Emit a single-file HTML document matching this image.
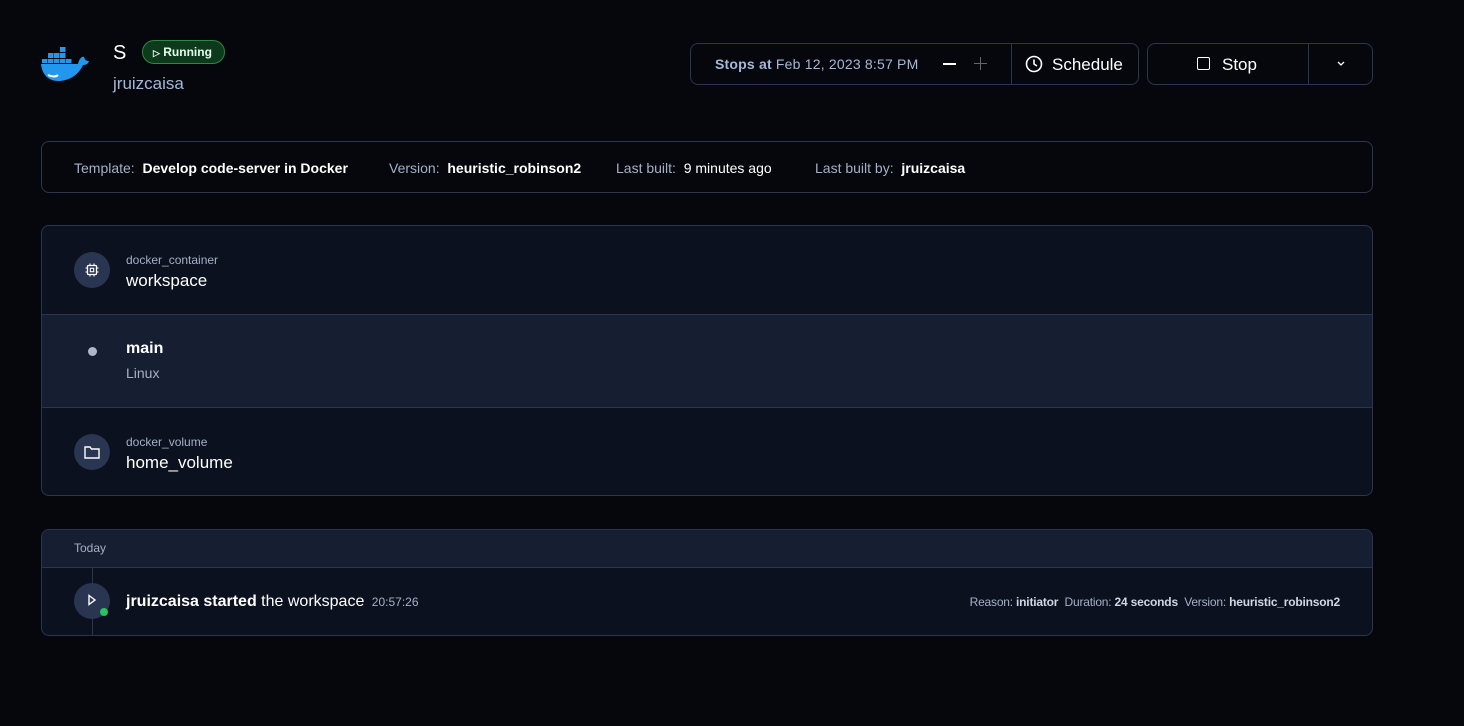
<!DOCTYPE html><html><head><style>
body{margin:0;width:1464px;height:726px;background:#05070d;font-family:"Liberation Sans",sans-serif;color:#fff;position:relative;overflow:hidden}
.a{position:absolute}
.box{position:absolute;border:1px solid #2b3550;border-radius:8px;box-sizing:border-box}
.lbl{color:#a5b0c6}
.ic{position:absolute;left:32px;width:36px;height:36px;border-radius:50%;background:#2a3552}
</style></head><body>
<svg class="a" style="left:40px;top:44px" width="50" height="38" viewBox="0 0 50 38">
<g fill="#2396ed"><rect x="20" y="3" width="5.5" height="5"/><rect x="14" y="9" width="5.5" height="5"/><rect x="20" y="9" width="5.5" height="5"/><rect x="8" y="9" width="5.5" height="5"/><rect x="2" y="15" width="5.5" height="4"/><rect x="8" y="15" width="5.5" height="4"/><rect x="14" y="15" width="5.5" height="4"/><rect x="20" y="15" width="5.5" height="4"/><rect x="26" y="15" width="5.5" height="4"/>
<path d="M1 20 H38 C39 15 42 12 44 13 C45 16 46 17 49 17 C48 20 46 21 43 21 C38 32 28 37 18 37 C8 37 2 30 1 20Z"/></g>
<path d="M8 31 C12 33 16 33 18 31" stroke="#fff" stroke-width="2" fill="none"/></svg>
<div class="a" style="left:113px;top:42px;font-size:20px">S</div>
<div class="a" style="left:142px;top:40px;width:81px;height:22px;border:1px solid #2b8a3e;background:#0d3a1c;border-radius:12px;font-size:12px;line-height:22px;color:#e5ffe8;font-weight:bold"><span style="margin-left:10px;font-size:9px">▷</span> Running</div>
<div class="a" style="left:113px;top:74px;font-size:17px;color:#a5b8d8">jruizcaisa</div>

<div class="box" style="left:690px;top:43px;width:449px;height:42px;background:#05070d"></div>
<div class="a" style="left:1011px;top:43px;width:1px;height:42px;background:#2b3550"></div>
<div class="a" style="left:715px;top:56px;font-size:14px;color:#a5b8d8;letter-spacing:0.2px"><b>Stops at</b> Feb 12, 2023 8:57 PM</div>
<div class="a" style="left:943px;top:63px;width:13px;height:2px;background:#fff"></div>
<div class="a" style="left:974px;top:63px;width:13px;height:1px;background:#666"></div><div class="a" style="left:980px;top:57px;width:1px;height:13px;background:#666"></div>
<svg class="a" style="left:1025px;top:55px" width="18" height="18" viewBox="0 0 18 18"><circle cx="9" cy="9" r="7.5" stroke="#fff" stroke-width="1.6" fill="none"/><path d="M9 4.5V9L12 11" stroke="#fff" stroke-width="1.6" fill="none"/></svg>
<div class="a" style="left:1052px;top:55px;font-size:17px">Schedule</div>
<div class="box" style="left:1147px;top:43px;width:226px;height:42px"></div>
<div class="a" style="left:1308px;top:43px;width:1px;height:42px;background:#2b3550"></div>
<div class="a" style="left:1197px;top:57px;width:11px;height:11px;border:1.5px solid #fff;border-radius:2px"></div>
<div class="a" style="left:1222px;top:55px;font-size:17px">Stop</div>
<svg class="a" style="left:1336px;top:60px" width="10" height="8"><path d="M2 2L5 5L8 2" stroke="#fff" stroke-width="1.3" fill="none"/></svg>

<div class="box" style="left:41px;top:141px;width:1332px;height:52px"></div>
<div class="a" style="left:74px;top:160px;font-size:14px;white-space:pre"><span class="lbl">Template:</span>  <b>Develop code-server in Docker</b></div>
<div class="a" style="left:389px;top:160px;font-size:14px;white-space:pre"><span class="lbl">Version:</span>  <b>heuristic_robinson2</b></div>
<div class="a" style="left:616px;top:160px;font-size:14px;white-space:pre"><span class="lbl">Last built:</span>  9 minutes ago</div>
<div class="a" style="left:815px;top:160px;font-size:14px;white-space:pre"><span class="lbl">Last built by:</span>  <b>jruizcaisa</b></div>

<div class="box" style="left:41px;top:225px;width:1332px;height:271px;background:#0b111e;overflow:hidden">
<div class="a" style="left:0;top:88px;width:1332px;height:92px;background:#161e31;border-top:1px solid #2b3550;border-bottom:1px solid #2b3550"></div>
<div class="ic" style="top:26px"></div>
<svg class="a" style="left:42px;top:36px" width="16" height="16" viewBox="0 0 16 16"><rect x="3.5" y="3.5" width="9" height="9" rx="1" stroke="#fff" stroke-width="1.3" fill="none"/><rect x="6.3" y="6.3" width="3.4" height="3.4" stroke="#fff" stroke-width="1.1" fill="none"/><path d="M6 1.5V3.5M10 1.5V3.5M6 12.5V14.5M10 12.5V14.5M1.5 6H3.5M1.5 10H3.5M12.5 6H14.5M12.5 10H14.5" stroke="#fff" stroke-width="1.1"/></svg>
<div class="a" style="left:84px;top:27px;font-size:12px;color:#a5b0c6">docker_container</div>
<div class="a" style="left:84px;top:45px;font-size:17px">workspace</div>
<div class="a" style="left:46px;top:121px;width:9px;height:9px;border-radius:50%;background:#aeb8cc"></div>
<div class="a" style="left:84px;top:114px;font-size:16px;font-weight:bold">main</div>
<div class="a" style="left:84px;top:139px;font-size:14px;color:#a5b0c6">Linux</div>
<div class="ic" style="top:208px"></div>
<svg class="a" style="left:41px;top:218px" width="18" height="16"><path d="M2 3H7L8.5 5H16V14H2Z" stroke="#fff" stroke-width="1.4" fill="none"/></svg>
<div class="a" style="left:84px;top:209px;font-size:12px;color:#a5b0c6">docker_volume</div>
<div class="a" style="left:84px;top:227px;font-size:17px">home_volume</div>
</div>

<div class="box" style="left:41px;top:529px;width:1332px;height:107px;background:#0b111e;overflow:hidden">
<div class="a" style="left:0;top:0;width:1332px;height:37px;background:#161e31;border-bottom:1px solid #2b3550"></div>
<div class="a" style="left:32px;top:11px;font-size:12px;color:#a5b0c6">Today</div>
<div class="a" style="left:50px;top:38px;width:1px;height:70px;background:#2b3550"></div>
<div class="ic" style="top:53px"></div>
<svg class="a" style="left:45px;top:64px" width="10" height="12"><path d="M2 1.5L8 6L2 10.5Z" stroke="#fff" stroke-width="1.4" fill="none"/></svg>
<div class="a" style="left:58px;top:78px;width:8px;height:8px;border-radius:50%;background:#22c55e"></div>
<div class="a" style="left:84px;top:63px;font-size:16px"><b>jruizcaisa started</b> the workspace <span style="font-size:12px;color:#a5b0c6;margin-left:3px">20:57:26</span></div>
<div class="a" style="right:32px;top:65px;font-size:12px;color:#a5b0c6;white-space:pre;letter-spacing:-0.2px">Reason: <b style="color:#cfd6e6">initiator</b>  Duration: <b style="color:#cfd6e6">24 seconds</b>  Version: <b style="color:#cfd6e6">heuristic_robinson2</b></div>
</div>
</body></html>
